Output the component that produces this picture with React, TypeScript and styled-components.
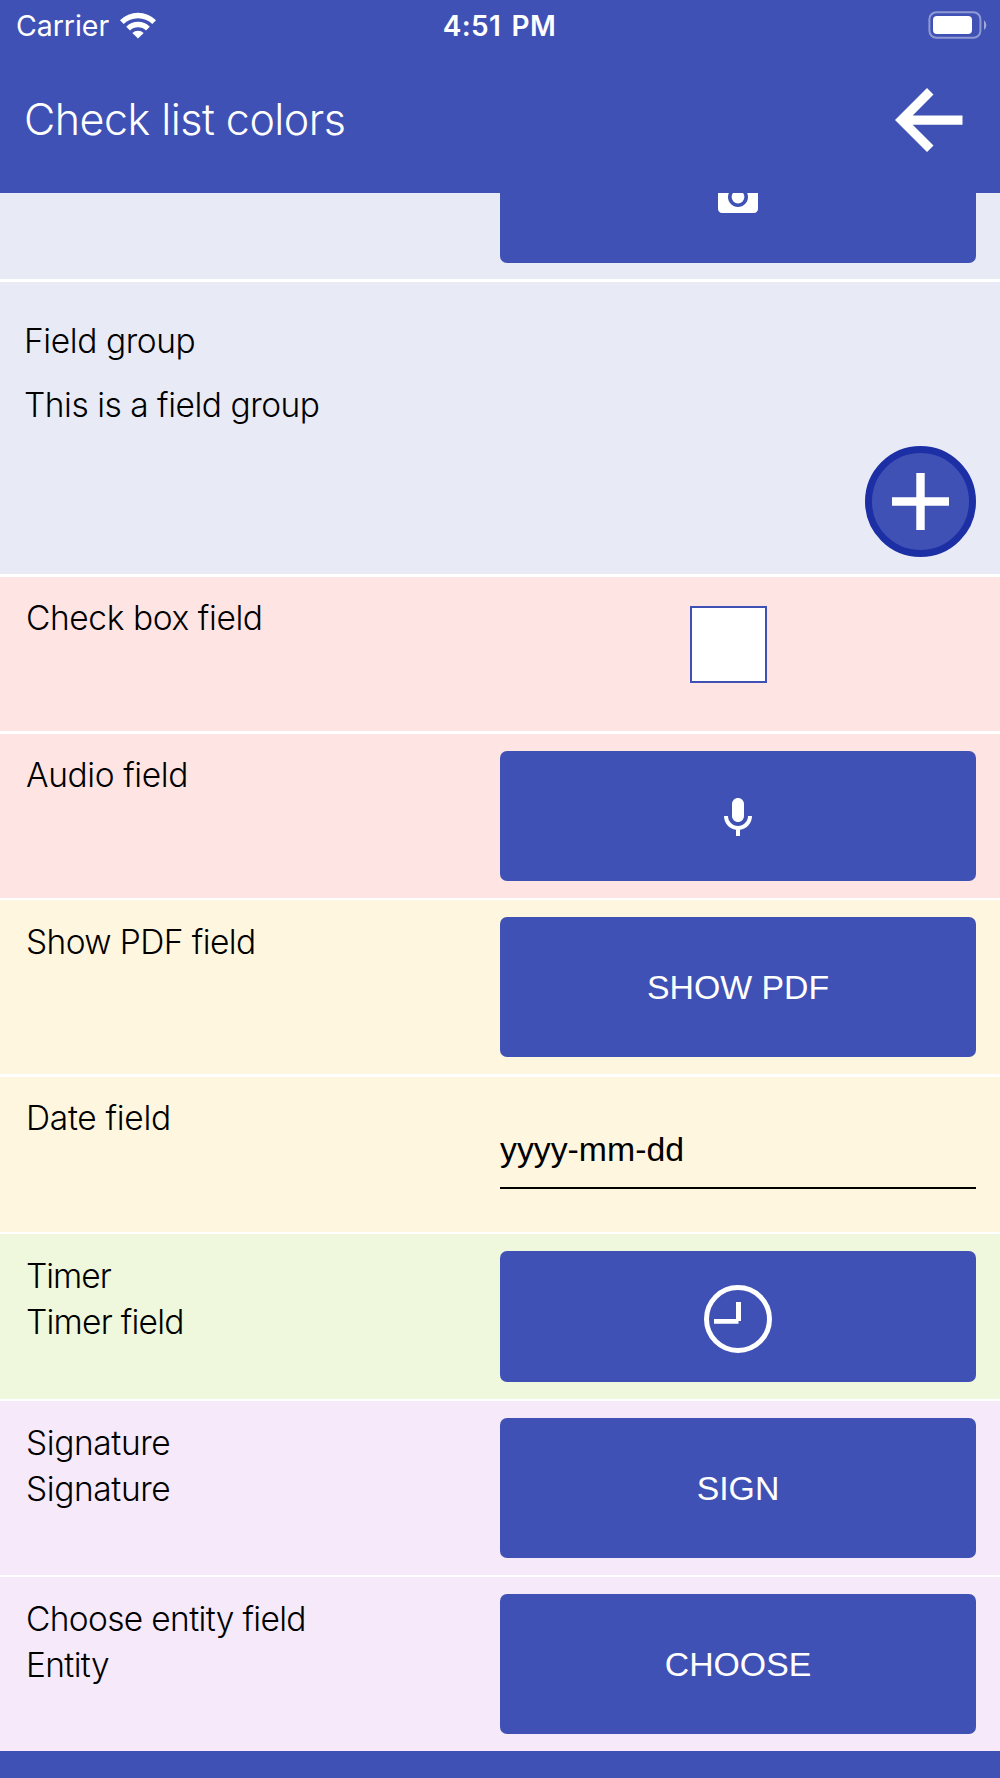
import React from "react";
import styled, { createGlobalStyle } from "styled-components";

const BLUE = "#3f51b5";
const LIGHT = `Inter, "Liberation Sans", sans-serif`;
const REGULAR = `"Liberation Sans", Arial, sans-serif`;

const GlobalStyle = createGlobalStyle`
  * { box-sizing: border-box; }
  body { margin: 0; background: #fff; }
`;

const Screen = styled.div`
  display: flex;
  flex-direction: column;
  width: 1000px;
  height: 1778px;
  overflow: hidden;
  color: #000;
  background: #fff;
`;

const Header = styled.header`
  flex: none;
  height: 193px;
  background: ${BLUE};
  color: #fff;
`;

const StatusBar = styled.div`
  display: grid;
  grid-template-columns: 1fr auto 1fr;
  align-items: center;
  height: 48px;
  padding: 2px 12px 0;
  font-family: Inter, sans-serif;
  font-size: 28.5px;
  line-height: 46px;
`;

const Carrier = styled.div`
  display: flex;
  align-items: center;
  gap: 10px;
  padding-left: 4px;
  letter-spacing: -0.05px;

  span { padding-top: 1px; }
  svg { margin-bottom: 2px; }
`;

const Clock = styled.div`
  padding: 1px 1px 0 0;
  font-weight: 600;
  font-size: 28px;
  letter-spacing: 0.35px;
  word-spacing: 3px;
`;

const BatterySlot = styled.div`
  display: flex;
  justify-content: flex-end;
  padding-bottom: 1px;
`;

const TitleBar = styled.div`
  display: flex;
  align-items: center;
  justify-content: space-between;
  height: 144px;
  padding: 0 37px 0 24px;
`;

const Title = styled.h1`
  margin: 0;
  font: 300 43px/60px ${LIGHT};
  letter-spacing: -0.52px;
  padding-bottom: 3px;
`;

const BackButton = styled.button`
  display: flex;
  padding: 0;
  border: 0;
  background: none;
`;

const List = styled.main`
  flex: none;
`;

const Row = styled.section<{ $tint: string; $height: number; $rule?: number }>`
  display: flex;
  height: ${(p) => p.$height}px;
  padding-right: 24px;
  background: ${(p) => p.$tint};
  border-bottom: ${(p) => p.$rule ?? 3}px solid #fff;
  overflow: hidden;
`;

const Labels = styled.div<{ $top?: number }>`
  width: 500px;
  padding: ${(p) => p.$top ?? 19}px 0 0 26px;
`;

const Label = styled.div<{ $track?: number }>`
  font: 300 33.5px/46px ${LIGHT};
  letter-spacing: ${(p) => p.$track ?? -0.4}px;
  white-space: nowrap;
`;

const Control = styled.div<{ $top?: number }>`
  width: 476px;
  padding-top: ${(p) => p.$top ?? 17}px;
`;

const ActionButton = styled.button<{ $height: number; $nudge?: number }>`
  display: flex;
  align-items: center;
  justify-content: center;
  width: 476px;
  height: ${(p) => p.$height}px;
  padding: ${(p) => Math.max(p.$nudge ?? 0, 0)}px 0 ${(p) => Math.max(-(p.$nudge ?? 0), 0)}px;
  border: 0;
  border-radius: 7px;
  background: ${BLUE};
  color: #fff;
  font: 400 33.8px/40px ${REGULAR};
`;

const ClippedControl = styled.div`
  display: flex;
  align-items: flex-end;
  height: 70px;
`;

const Group = styled.section`
  display: flex;
  flex-direction: column;
  height: 295px;
  padding: 36px 24px 0;
  background: #e8eaf6;
  border-bottom: 3px solid #fff;
`;

const GroupText = styled(Label)`
  line-height: 46px;
  & + & { margin-top: 17.5px; }
`;

const AddButton = styled.button`
  display: flex;
  align-items: center;
  justify-content: center;
  align-self: flex-end;
  width: 111px;
  height: 111px;
  margin-top: 18.5px;
  padding: 0;
  border: 7px solid #1c2fa5;
  border-radius: 50%;
  background: ${BLUE};
`;

const CheckBox = styled.div`
  width: 77px;
  height: 77px;
  margin-left: 190px;
  border: 2px solid ${BLUE};
  background: #fff;
`;

const DateInput = styled.div`
  height: 72px;
  border-bottom: 2px solid #000;
  font: 400 33.8px/64px ${REGULAR};
`;

const Footer = styled.footer`
  flex: 1;
  background: ${BLUE};
`;

const WifiIcon = () => (
  <svg width="38" height="28" viewBox="0 0 38 28" fill="#fff">
    <path d="M1 9.2a25.5 25.5 0 0 1 36 0l-3.7 3.9a20.2 20.2 0 0 0-28.6 0z" />
    <path d="M7.2 15.7a16.7 16.7 0 0 1 23.6 0l-3.8 3.9a11.4 11.4 0 0 0-16 0z" />
    <path d="M13.3 22a8.2 8.2 0 0 1 11.4 0L19 27.6z" />
  </svg>
);

const BatteryIcon = () => (
  <svg width="60" height="28" viewBox="0 0 60 28">
    <rect x="1.4" y="1.2" width="51" height="25.6" rx="7" fill="none" stroke="#fff" strokeOpacity=".42" strokeWidth="2" />
    <rect x="5" y="5" width="39" height="18" rx="4" fill="#fff" />
    <path d="M56 9.3a6 6 0 0 1 0 9.6z" fill="#fff" fillOpacity=".5" />
  </svg>
);

const BackIcon = () => (
  <svg width="68" height="66" viewBox="0 0 68 66" fill="#fff">
    <path d="M0 33 32 1l6.5 6.5L17.7 28.4h49.8v9.3H17.7l20.8 20.8L32 65z" />
  </svg>
);

const CameraIcon = () => (
  <svg width="48" height="48" viewBox="0 0 24 24" fill="#fff">
    <circle cx="12" cy="12" r="3.2" />
    <path d="M9 2 7.17 4H4c-1.1 0-2 .9-2 2v12c0 1.1.9 2 2 2h16c1.1 0 2-.9 2-2V6c0-1.1-.9-2-2-2h-3.17L15 2H9zm3 15c-2.76 0-5-2.24-5-5s2.24-5 5-5 5 2.24 5 5-2.24 5-5 5z" />
  </svg>
);

const MicIcon = () => (
  <svg width="48" height="48" viewBox="0 0 24 24" fill="#fff">
    <path d="M12 14c1.66 0 3-1.34 3-3V5c0-1.66-1.34-3-3-3S9 3.34 9 5v6c0 1.66 1.34 3 3 3z" />
    <path d="M17 11c0 2.76-2.24 5-5 5s-5-2.24-5-5H5c0 3.53 2.61 6.43 6 6.92V21h2v-3.08c3.39-.49 6-3.39 6-6.92h-2z" />
  </svg>
);

const TimerIcon = () => (
  <svg width="68" height="68" viewBox="0 0 68 68" fill="#fff">
    <circle cx="34" cy="34" r="31.5" fill="none" stroke="#fff" strokeWidth="5" />
    <path d="M32 17h5v19h-2.5v2.8H10V34h22z" />
  </svg>
);

const PlusIcon = () => (
  <svg width="57" height="57" viewBox="0 0 57 57" fill="#fff">
    <path d="M24.3 0h8.4v24.3H57v8.4H32.7V57h-8.4V32.7H0v-8.4h24.3z" />
  </svg>
);

export default function App() {
  return (
    <Screen>
      <GlobalStyle />
      <Header>
        <StatusBar>
          <Carrier>
            <span>Carrier</span>
            <WifiIcon />
          </Carrier>
          <Clock>4:51 PM</Clock>
          <BatterySlot>
            <BatteryIcon />
          </BatterySlot>
        </StatusBar>
        <TitleBar>
          <Title>Check list colors</Title>
          <BackButton aria-label="Back">
            <BackIcon />
          </BackButton>
        </TitleBar>
      </Header>
      <List>
        <Row $tint="#e8eaf6" $height={89}>
          <Labels />
          <ClippedControl>
            <ActionButton $height={131} $nudge={-2} aria-label="Take photo">
              <CameraIcon />
            </ActionButton>
          </ClippedControl>
        </Row>
        <Group>
          <GroupText>Field group</GroupText>
          <GroupText $track={-0.48}>This is a field group</GroupText>
          <AddButton aria-label="Add">
            <PlusIcon />
          </AddButton>
        </Group>
        <Row $tint="#ffe4e4" $height={157}>
          <Labels $top={18}>
            <Label>Check box field</Label>
          </Labels>
          <Control $top={28.5}>
            <CheckBox />
          </Control>
        </Row>
        <Row $tint="#ffe4e4" $height={166} $rule={2}>
          <Labels $top={18}>
            <Label>Audio field</Label>
          </Labels>
          <Control>
            <ActionButton $height={130} $nudge={4} aria-label="Record audio">
              <MicIcon />
            </ActionButton>
          </Control>
        </Row>
        <Row $tint="#fff6df" $height={177}>
          <Labels>
            <Label $track={-0.6}>Show PDF field</Label>
          </Labels>
          <Control>
            <ActionButton $height={140}>SHOW PDF</ActionButton>
          </Control>
        </Row>
        <Row $tint="#fff6df" $height={157} $rule={2}>
          <Labels $top={18}>
            <Label $track={-0.3}>Date field</Label>
          </Labels>
          <Control $top={40}>
            <DateInput>yyyy-mm-dd</DateInput>
          </Control>
        </Row>
        <Row $tint="#eff8dc" $height={167} $rule={2}>
          <Labels>
            <Label $track={-1}>Timer</Label>
            <Label $track={-0.75}>Timer field</Label>
          </Labels>
          <Control>
            <ActionButton $height={131} $nudge={5} aria-label="Start timer">
              <TimerIcon />
            </ActionButton>
          </Control>
        </Row>
        <Row $tint="#f5e9fa" $height={176} $rule={2}>
          <Labels>
            <Label>Signature</Label>
            <Label>Signature</Label>
          </Labels>
          <Control>
            <ActionButton $height={140}>SIGN</ActionButton>
          </Control>
        </Row>
        <Row $tint="#f5e9fa" $height={174} $rule={0}>
          <Labels>
            <Label $track={-0.66}>Choose entity field</Label>
            <Label $track={-0.65}>Entity</Label>
          </Labels>
          <Control>
            <ActionButton $height={140}>CHOOSE</ActionButton>
          </Control>
        </Row>
      </List>
      <Footer />
    </Screen>
  );
}
